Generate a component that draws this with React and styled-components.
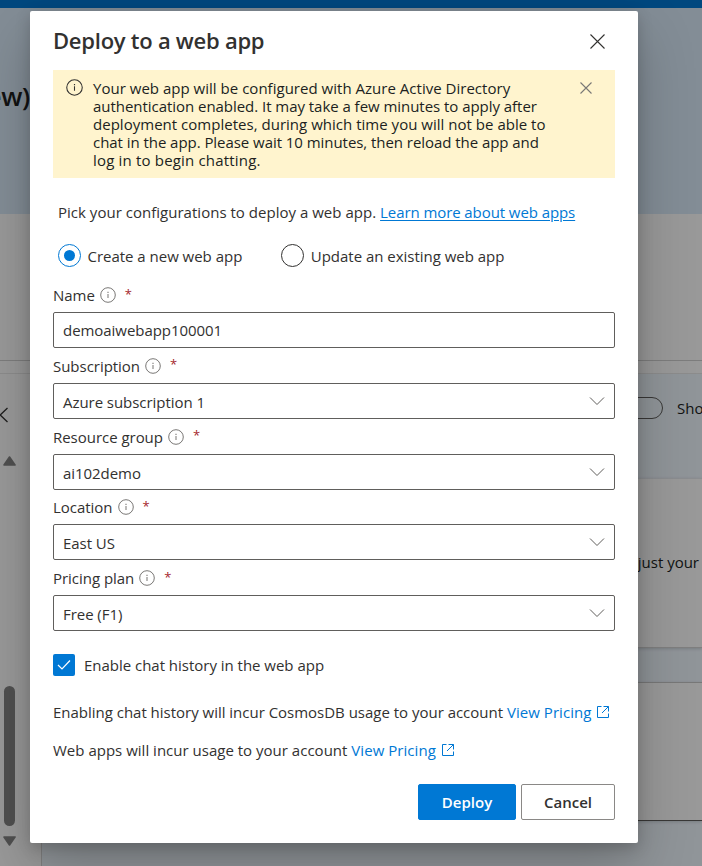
import React from 'react';
import styled, { createGlobalStyle } from 'styled-components';

const GlobalStyle = createGlobalStyle`
  *, *::before, *::after { box-sizing: border-box; }
  body {
    margin: 0;
    overflow: hidden;
    font-family: "Open Sans", "Noto Sans", sans-serif;
    font-size: 15px;
    color: #323130;
  }
`;

/* ---------- page behind the dialog ---------- */

const Screen = styled.div`
  position: relative;
  width: 702px;
  height: 866px;
  overflow: hidden;
  background: #fff;
`;

const Page = styled.div`
  display: flex;
  flex-direction: column;
  height: 100%;
`;

const TopBar = styled.div`
  flex: 0 0 8px;
  background: #0078d4;
`;

const Hero = styled.div`
  flex: 0 0 206px;
  padding-top: 68px;
  background: #daecfb;
`;

const HeroTitle = styled.div`
  display: flex;
  justify-content: flex-end;
  width: 30px;
  font-size: 26px;
  line-height: 40px;
  font-weight: 600;
  letter-spacing: -0.3px;
  white-space: nowrap;
  color: #201f1e;
`;

const Intro = styled.div`
  flex: 0 0 147px;
  border-bottom: 1px solid #d0d0d0;
`;

const Strip = styled.div`
  flex: 0 0 12px;
`;

const Workspace = styled.div`
  flex: 1;
  display: flex;
  border-top: 1px solid #eaeaea;
`;

const Sidebar = styled.div`
  flex: 0 0 41px;
  display: flex;
  flex-direction: column;
`;

const CollapseIcon = styled.svg`
  display: block;
  width: 9px;
  height: 16px;
  margin-top: 33px;
`;

const ScrollTrack = styled.div`
  display: flex;
  flex-direction: column;
  align-items: center;
  justify-content: space-between;
  width: 19px;
  height: 390px;
  margin-top: 33px;
`;

const ScrollArrow = styled.svg`
  display: block;
  width: 13px;
  height: 10px;
`;

const ScrollThumb = styled.div`
  width: 11px;
  height: 140px;
  margin: auto 0 10px;
  border-radius: 5.5px;
  background: #858585;
`;

const Main = styled.div`
  flex: 1;
  display: flex;
  flex-direction: column;
  border-left: 1px solid #d6d6d6;
  background: #f0f8ff;
`;

const ToggleRow = styled.div`
  flex: 0 0 104px;
  display: flex;
  align-items: flex-start;
  justify-content: flex-end;
  gap: 14px;
  padding-top: 23px;
  color: #201f1e;
`;

const Toggle = styled.div`
  width: 44px;
  height: 22px;
  border: 1px solid #605e5c;
  border-radius: 11px;
`;

const ToggleLabel = styled.span`
  width: 25px;
  line-height: 22px;
  white-space: nowrap;
`;

const Card = styled.div`
  flex: 0 0 ${p => p.$height}px;
  display: flex;
  justify-content: flex-end;
  padding: 73px 3px 0 0;
  margin-bottom: ${p => p.$gap}px;
  background: #fff;
  border-top: 1px solid ${p => p.$top};
  border-bottom: 1px solid ${p => p.$bottom};
  box-shadow: 0 1px 3px rgba(0, 0, 0, 0.16);
  line-height: 20px;
  color: #201f1e;
`;

/* ---------- dialog ---------- */

const Overlay = styled.div`
  position: absolute;
  inset: 0;
  display: flex;
  align-items: flex-start;
  padding: 11px 0 0 30px;
  background: rgba(0, 0, 0, 0.4);
`;

const Dialog = styled.div`
  display: flex;
  flex-direction: column;
  width: 608px;
  height: 832px;
  padding: 0 23px 23px;
  border-radius: 2px;
  background: #fff;
  box-shadow: 0 25.6px 57.6px rgba(0, 0, 0, 0.22), 0 4.8px 14.4px rgba(0, 0, 0, 0.18);
`;

const DialogHeader = styled.div`
  flex: 0 0 59px;
  display: flex;
  align-items: center;
  justify-content: space-between;
  padding: 1px 10px 0 0;
`;

const Title = styled.h1`
  margin: 0;
  padding-bottom: 3px;
  font-size: 22px;
  line-height: 30px;
  font-weight: 600;
  letter-spacing: -0.25px;
`;

const CloseIcon = styled.svg`
  display: block;
  width: ${p => p.$size}px;
  height: ${p => p.$size}px;
  stroke: ${p => p.$color};
  stroke-width: 1.1;
  fill: none;
`;

const Banner = styled.div`
  flex: 0 0 108px;
  display: flex;
  align-items: flex-start;
  padding: 9px 23px 9px 13px;
  background: #fff4ce;
  color: #201f1e;
`;

const BannerText = styled.div`
  flex: 1;
  margin-left: 10px;
  line-height: 18px;
`;

const BannerLine = styled.div`
  white-space: nowrap;
  letter-spacing: ${p => p.$spacing}px;
`;

const BannerDismiss = styled.div`
  padding-top: 3px;
`;

const InfoIcon = styled.svg`
  display: block;
  flex: none;
  width: ${p => p.$size}px;
  height: ${p => p.$size}px;
  color: ${p => p.$color};
`;

const Lead = styled.p`
  flex: 0 0 20px;
  margin: 24px 0 0;
  padding-left: 5px;
  line-height: 20px;
  letter-spacing: 0.02px;
  white-space: nowrap;
`;

const Link = styled.a`
  color: #0078d4;
  text-decoration: ${p => (p.$underline ? 'underline' : 'none')};
  text-underline-offset: 2px;
  letter-spacing: ${p => (p.$underline ? '-0.08px' : '0.05px')};
`;

const RadioGroup = styled.div`
  flex: 0 0 23px;
  display: flex;
  gap: 39px;
  margin-top: 22px;
  padding-left: 5px;
`;

const RadioOption = styled.label`
  display: flex;
  align-items: center;
  gap: 6.5px;
  white-space: nowrap;
  line-height: 23px;
  letter-spacing: -0.02px;
`;

const RadioText = styled.span`
  padding-top: 2px;
  line-height: 21px;
`;

const RadioCircle = styled.span`
  display: flex;
  align-items: center;
  justify-content: center;
  width: 23px;
  height: 23px;
  border: 1px solid ${p => (p.$checked ? '#0078d4' : '#323130')};
  border-radius: 50%;

  &::after {
    content: "";
    width: 11px;
    height: 11px;
    border-radius: 50%;
    background: ${p => (p.$checked ? '#0078d4' : 'transparent')};
  }
`;

const Form = styled.div`
  flex: 0 0 353.75px;
  margin-top: 10.25px;
`;

const Field = styled.div`
  display: flex;
  flex-direction: column;
  height: 70.75px;
`;

const FieldLabel = styled.div`
  flex: 0 0 34.75px;
  display: flex;
  align-items: center;
  padding-top: 1px;
  line-height: 20px;
`;

const LabelText = styled.span`
  margin-right: 5px;
  letter-spacing: -0.03px;
`;

const Required = styled.span`
  margin: -3px 0 0 9px;
  font-size: 13px;
  color: #a4262c;
`;

const Input = styled.div`
  flex: 0 0 36px;
  display: flex;
  align-items: center;
  justify-content: space-between;
  padding: 0 9px;
  border: 1px solid #605e5c;
  border-radius: 2px;
  letter-spacing: -0.05px;
`;

const InputValue = styled.span`
  padding-top: ${p => (p.$select ? 2 : 0)}px;
`;

const ChevronIcon = styled.svg`
  display: block;
  width: 16px;
  height: 10px;
  fill: none;
  stroke: #605e5c;
  stroke-width: 1;
`;

const CheckRow = styled.label`
  flex: 0 0 22px;
  display: flex;
  align-items: center;
  gap: 9px;
  margin-top: 23px;
  letter-spacing: -0.02px;
`;

const CheckBox = styled.span`
  display: flex;
  align-items: center;
  justify-content: center;
  width: 22px;
  height: 22px;
  border-radius: 2px;
  background: #0078d4;
`;

const CheckIcon = styled.svg`
  display: block;
  width: 14px;
  height: 12px;
  fill: none;
  stroke: #fff;
  stroke-width: 1.2;
`;

const Note = styled.p`
  flex: 0 0 20px;
  display: flex;
  align-items: center;
  margin: ${p => p.$top}px 0 0;
  line-height: 20px;
  letter-spacing: ${p => p.$spacing}px;
  white-space: pre;
`;

const ExternalIcon = styled.svg`
  display: block;
  width: 12px;
  height: 12px;
  margin-left: 6px;
  fill: none;
  stroke: #0078d4;
  stroke-width: 1;
`;

const Actions = styled.div`
  display: flex;
  justify-content: flex-end;
  gap: 5px;
  margin-top: auto;
`;

const Button = styled.button`
  width: ${p => p.$width}px;
  height: 36px;
  padding: 0;
  border: 1px solid ${p => (p.$primary ? '#0078d4' : '#8a8886')};
  border-radius: 2px;
  background: ${p => (p.$primary ? '#0078d4' : '#fff')};
  color: ${p => (p.$primary ? '#fff' : '#323130')};
  font: 600 15px "Open Sans", sans-serif;
`;

const Close = ({ size, color }) => (
  <CloseIcon $size={size} $color={color} viewBox={`0 0 ${size} ${size}`}>
    <path d={`M.5.5 ${size - 0.5} ${size - 0.5}M${size - 0.5}.5.5 ${size - 0.5}`} />
  </CloseIcon>
);

const Info = ({ size, color }) => (
  <InfoIcon $size={size} $color={color} viewBox="0 0 16 16">
    <circle cx="8" cy="8" r="7.3" fill="none" stroke="currentColor" strokeWidth="1" />
    <path d="M7.5 6.9h1v4.2h-1zM7.45 4.8h1.1v1.1h-1.1z" fill="currentColor" />
  </InfoIcon>
);

const External = () => (
  <ExternalIcon viewBox="0 0 12 12">
    <path d="M4.5 .5H.5v11h11V7.5M6.5.5h5v5M11.5.5 5 7" />
  </ExternalIcon>
);

const bannerLines = [
  ['Your web app will be configured with Azure Active Directory', 0.02],
  ['authentication enabled. It may take a few minutes to apply after', -0.04],
  ['deployment completes, during which time you will not be able to', 0.02],
  ['chat in the app. Please wait 10 minutes, then reload the app and', -0.05],
  ['log in to begin chatting.', 0.18],
];

const fields = [
  { label: 'Name', value: 'demoaiwebapp100001' },
  { label: 'Subscription', value: 'Azure subscription 1', select: true },
  { label: 'Resource group', value: 'ai102demo', select: true },
  { label: 'Location', value: 'East US', select: true },
  { label: 'Pricing plan', value: 'Free (F1)', select: true },
];

const Background = () => (
  <Page>
    <TopBar />
    <Hero>
      <HeroTitle>ew)</HeroTitle>
    </Hero>
    <Intro />
    <Strip />
    <Workspace>
      <Sidebar>
        <CollapseIcon viewBox="0 0 9 16">
          <path d="M7.5 1 .2 8l7.3 7" fill="none" stroke="#323130" strokeWidth="1.3" />
        </CollapseIcon>
        <ScrollTrack>
          <ScrollArrow viewBox="0 0 13 10">
            <path d="M6.5 1 12 9H1z" fill="#858585" stroke="#858585" strokeWidth="1.6" strokeLinejoin="round" />
          </ScrollArrow>
          <ScrollThumb />
          <ScrollArrow viewBox="0 0 13 10">
            <path d="M6.5 9 12 1H1z" fill="#858585" stroke="#858585" strokeWidth="1.6" strokeLinejoin="round" />
          </ScrollArrow>
        </ScrollTrack>
      </Sidebar>
      <Main>
        <ToggleRow>
          <Toggle />
          <ToggleLabel>Sho</ToggleLabel>
        </ToggleRow>
        <Card $height={170} $gap={34} $top="#e8ecf0" $bottom="#d4d4d4">just your</Card>
        <Card $height={139} $gap={0} $top="#c8c8c8" $bottom="#605e5c" />
      </Main>
    </Workspace>
  </Page>
);

export default function App() {
  return (
    <Screen>
      <GlobalStyle />
      <Background />
      <Overlay>
        <Dialog role="dialog">
          <DialogHeader>
            <Title>Deploy to a web app</Title>
            <Close size={15} color="#323130" />
          </DialogHeader>
          <Banner>
            <Info size={17} color="#323130" />
            <BannerText>
              {bannerLines.map(([text, spacing]) => (
                <BannerLine key={text} $spacing={spacing}>{text}</BannerLine>
              ))}
            </BannerText>
            <BannerDismiss>
              <Close size={12} color="#797775" />
            </BannerDismiss>
          </Banner>
          <Lead>
            Pick your configurations to deploy a web app. <Link $underline>Learn more about web apps</Link>
          </Lead>
          <RadioGroup>
            <RadioOption><RadioCircle $checked /><RadioText>Create a new web app</RadioText></RadioOption>
            <RadioOption><RadioCircle /><RadioText>Update an existing web app</RadioText></RadioOption>
          </RadioGroup>
          <Form>
            {fields.map(({ label, value, select }) => (
              <Field key={label}>
                <FieldLabel>
                  <LabelText>{label}</LabelText>
                  <Info size={16} color="#797775" />
                  <Required>*</Required>
                </FieldLabel>
                <Input>
                  <InputValue $select={select}>{value}</InputValue>
                  {select && (
                    <ChevronIcon viewBox="0 0 16 10">
                      <path d="M1 1.5 8 8.5l7-7" />
                    </ChevronIcon>
                  )}
                </Input>
              </Field>
            ))}
          </Form>
          <CheckRow>
            <CheckBox>
              <CheckIcon viewBox="0 0 14 12"><path d="M1 6l4 4 8-8.5" /></CheckIcon>
            </CheckBox>
            Enable chat history in the web app
          </CheckRow>
          <Note $top={26} $spacing={-0.015}>
            {'Enabling chat history will incur CosmosDB usage to your account '}
            <Link>View Pricing</Link>
            <External />
          </Note>
          <Note $top={18} $spacing={0.01}>
            {'Web apps will incur usage to your account '}
            <Link>View Pricing</Link>
            <External />
          </Note>
          <Actions>
            <Button $primary $width={98}>Deploy</Button>
            <Button $width={94}>Cancel</Button>
          </Actions>
        </Dialog>
      </Overlay>
    </Screen>
  );
}
